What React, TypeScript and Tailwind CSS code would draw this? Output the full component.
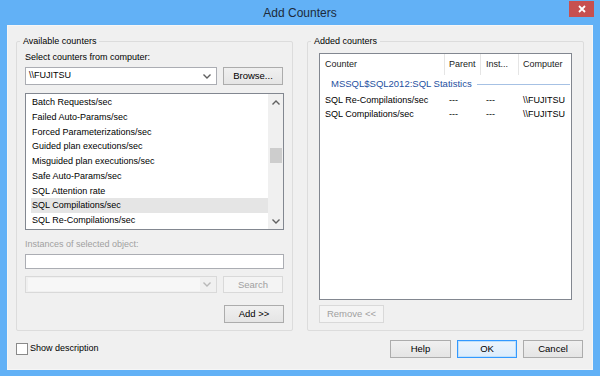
import clsx from "clsx";
import { ReactNode } from "react";

const Chevron = ({ up, color = "#606060" }: { up?: boolean; color?: string }) => (
  <svg width="8" height="5" viewBox="0 0 8 5" className={clsx(up && "rotate-180")}>
    <path d="M0.5 0.5 L4 4 L7.5 0.5" fill="none" stroke={color} strokeWidth="1.4" />
  </svg>
);

const Btn = ({
  children,
  disabled,
  primary,
  className,
}: {
  children: ReactNode;
  disabled?: boolean;
  primary?: boolean;
  className?: string;
}) => (
  <button
    className={clsx(
      "flex items-center justify-center border text-[9.5px] leading-none",
      disabled
        ? "border-[#d9d9d9] bg-[#f4f4f4] text-[#a0a0a0]"
        : primary
          ? "border-[#3399ff] bg-gradient-to-b from-[#ecf4fc] to-[#dcecfc] text-black shadow-[inset_0_0_0_1px_#bfe0fb]"
          : "border-[#acacac] bg-gradient-to-b from-[#f0f0f0] to-[#e5e5e5] text-black",
      className
    )}
  >
    {children}
  </button>
);

const counters = [
  "Batch Requests/sec",
  "Failed Auto-Params/sec",
  "Forced Parameterizations/sec",
  "Guided plan executions/sec",
  "Misguided plan executions/sec",
  "Safe Auto-Params/sec",
  "SQL Attention rate",
  "SQL Compilations/sec",
  "SQL Re-Compilations/sec",
];

const added = ["SQL Re-Compilations/sec", "SQL Compilations/sec"];

export default function App() {
  return (
    <div className="flex h-[376px] w-[600px] flex-col bg-[#62b1f6] px-[7px] pb-[6px] font-['Liberation_Sans',Arial,sans-serif] text-[9px] text-black">
      {/* title bar */}
      <div className="relative flex h-[25px] items-center justify-center">
        <span className="text-[12px] text-[#1c2a3a]">Add Counters</span>
        <button className="absolute right-[-1px] top-[1px] flex h-[16px] w-[25px] items-center justify-center bg-[#c75050]">
          <svg width="8" height="8" viewBox="0 0 8 8">
            <path d="M1 1 L7 7 M7 1 L1 7" stroke="white" strokeWidth="1.8" />
          </svg>
        </button>
      </div>

      <div className="flex flex-1 flex-col border border-[#f6f6f6] bg-[#f0f0f0]">
        <div className="flex gap-[14px] pl-[8px] pt-[9px]">
          {/* left group */}
          <fieldset className="flex w-[277px] flex-col border border-[#dcdcdc] rounded-[2px]">
            <legend className="ml-[3px] px-[3px] leading-[12px]">Available counters</legend>
            <div className="flex flex-col px-[8px] pb-[7px]">
              <div className="mt-[4px] leading-[12px]">Select counters from computer:</div>
              <div className="mt-[4px] flex h-[18px] gap-[6px]">
                <div className="flex w-[192px] items-center justify-between border border-[#abadb3] bg-white pl-[3px] pr-[5px]">
                  <span>\\FUJITSU</span>
                  <Chevron />
                </div>
                <Btn className="w-[60px]">Browse...</Btn>
              </div>
              <div className="mt-[8px] flex h-[137px] border border-[#828790] bg-white">
                <div className="flex flex-1 flex-col pl-[5px] pt-[1px]">
                  {counters.map((c) => (
                    <div
                      key={c}
                      className={clsx(
                        "h-[14.75px] pl-[1px] leading-[14.75px]",
                        c === "SQL Compilations/sec" && "bg-[#e5e5e5]"
                      )}
                    >
                      {c}
                    </div>
                  ))}
                </div>
                <div className="flex w-[15px] flex-col items-center bg-[#f0f0f0]">
                  <div className="flex h-[14px] items-center justify-center pt-[2px]">
                    <Chevron up />
                  </div>
                  <div className="mt-[40px] h-[15px] w-[12px] bg-[#cdcdcd]" />
                  <div className="mt-auto flex h-[14px] items-center justify-center pb-[2px]">
                    <Chevron />
                  </div>
                </div>
              </div>
              <div className="mt-[8px] leading-[12px] text-[#a0a0a0]">Instances of selected object:</div>
              <div className="mt-[4px] h-[15px] border border-[#abadb3] bg-white" />
              <div className="mt-[7px] flex h-[17px] gap-[6px]">
                <div className="flex w-[192px] items-center justify-between border border-[#d9d9d9] bg-[#f0f0f0] pl-[2px] pr-[5px]">
                  <div className="h-[13px] w-[172px] bg-[#f7f7f7]" />
                  <Chevron color="#b8b8b8" />
                </div>
                <Btn disabled className="w-[60px]">Search</Btn>
              </div>
              <div className="mt-[12px] flex justify-end">
                <Btn className="h-[18px] w-[60px]">Add &gt;&gt;</Btn>
              </div>
            </div>
          </fieldset>

          {/* right group */}
          <fieldset className="flex w-[277px] flex-col border border-[#dcdcdc] rounded-[2px]">
            <legend className="ml-[3px] px-[3px] leading-[12px]">Added counters</legend>
            <div className="flex flex-1 flex-col px-[11px] pb-[7px]">
              <div className="mt-[6px] flex h-[247px] flex-col border border-[#828790] bg-white">
                <div className="flex h-[21px] items-center text-[#1a1a1a]">
                  <div className="w-[124px] pl-[5px]">Counter</div>
                  <div className="h-full w-px bg-[#e5e5e5]" />
                  <div className="w-[35px] pl-[4px]">Parent</div>
                  <div className="h-full w-px bg-[#e5e5e5]" />
                  <div className="w-[37px] pl-[5px]">Inst...</div>
                  <div className="h-full w-px bg-[#e5e5e5]" />
                  <div className="flex-1 pl-[4px]">Computer</div>
                </div>
                <div className="mt-[2px] flex h-[14px] items-center pl-[11px] pr-[1px] text-[#1e4fa0]">
                  <span className="text-[9.5px]">MSSQL$SQL2012:SQL Statistics</span>
                  <div className="ml-[5px] h-px flex-1 bg-[#a6c1e4]" />
                </div>
                <div className="mt-[3px] flex flex-col">
                  {added.map((a) => (
                    <div key={a} className="flex h-[14px] items-center">
                      <div className="w-[125px] pl-[5px]">{a}</div>
                      <div className="w-[36px] pl-[4px]">---</div>
                      <div className="w-[38px] pl-[5px]">---</div>
                      <div className="flex-1 pl-[4px]">\\FUJITSU</div>
                    </div>
                  ))}
                </div>
              </div>
              <div className="mt-[5px] flex">
                <Btn disabled className="h-[18px] w-[65px]">Remove &lt;&lt;</Btn>
              </div>
            </div>
          </fieldset>
        </div>

        {/* bottom row */}
        <div className="mt-[9px] flex items-center justify-between pl-[8px] pr-[9px]">
          <label className="flex items-center">
            <span className="h-[12px] w-[12px] border border-[#8a8a8a] bg-white" />
            <span className="ml-[2px]">Show description</span>
          </label>
          <div className="flex gap-[6px]">
            <Btn className="h-[18px] w-[61px]">Help</Btn>
            <Btn primary className="h-[18px] w-[60px]">OK</Btn>
            <Btn className="h-[18px] w-[60px]">Cancel</Btn>
          </div>
        </div>
      </div>
    </div>
  );
}
